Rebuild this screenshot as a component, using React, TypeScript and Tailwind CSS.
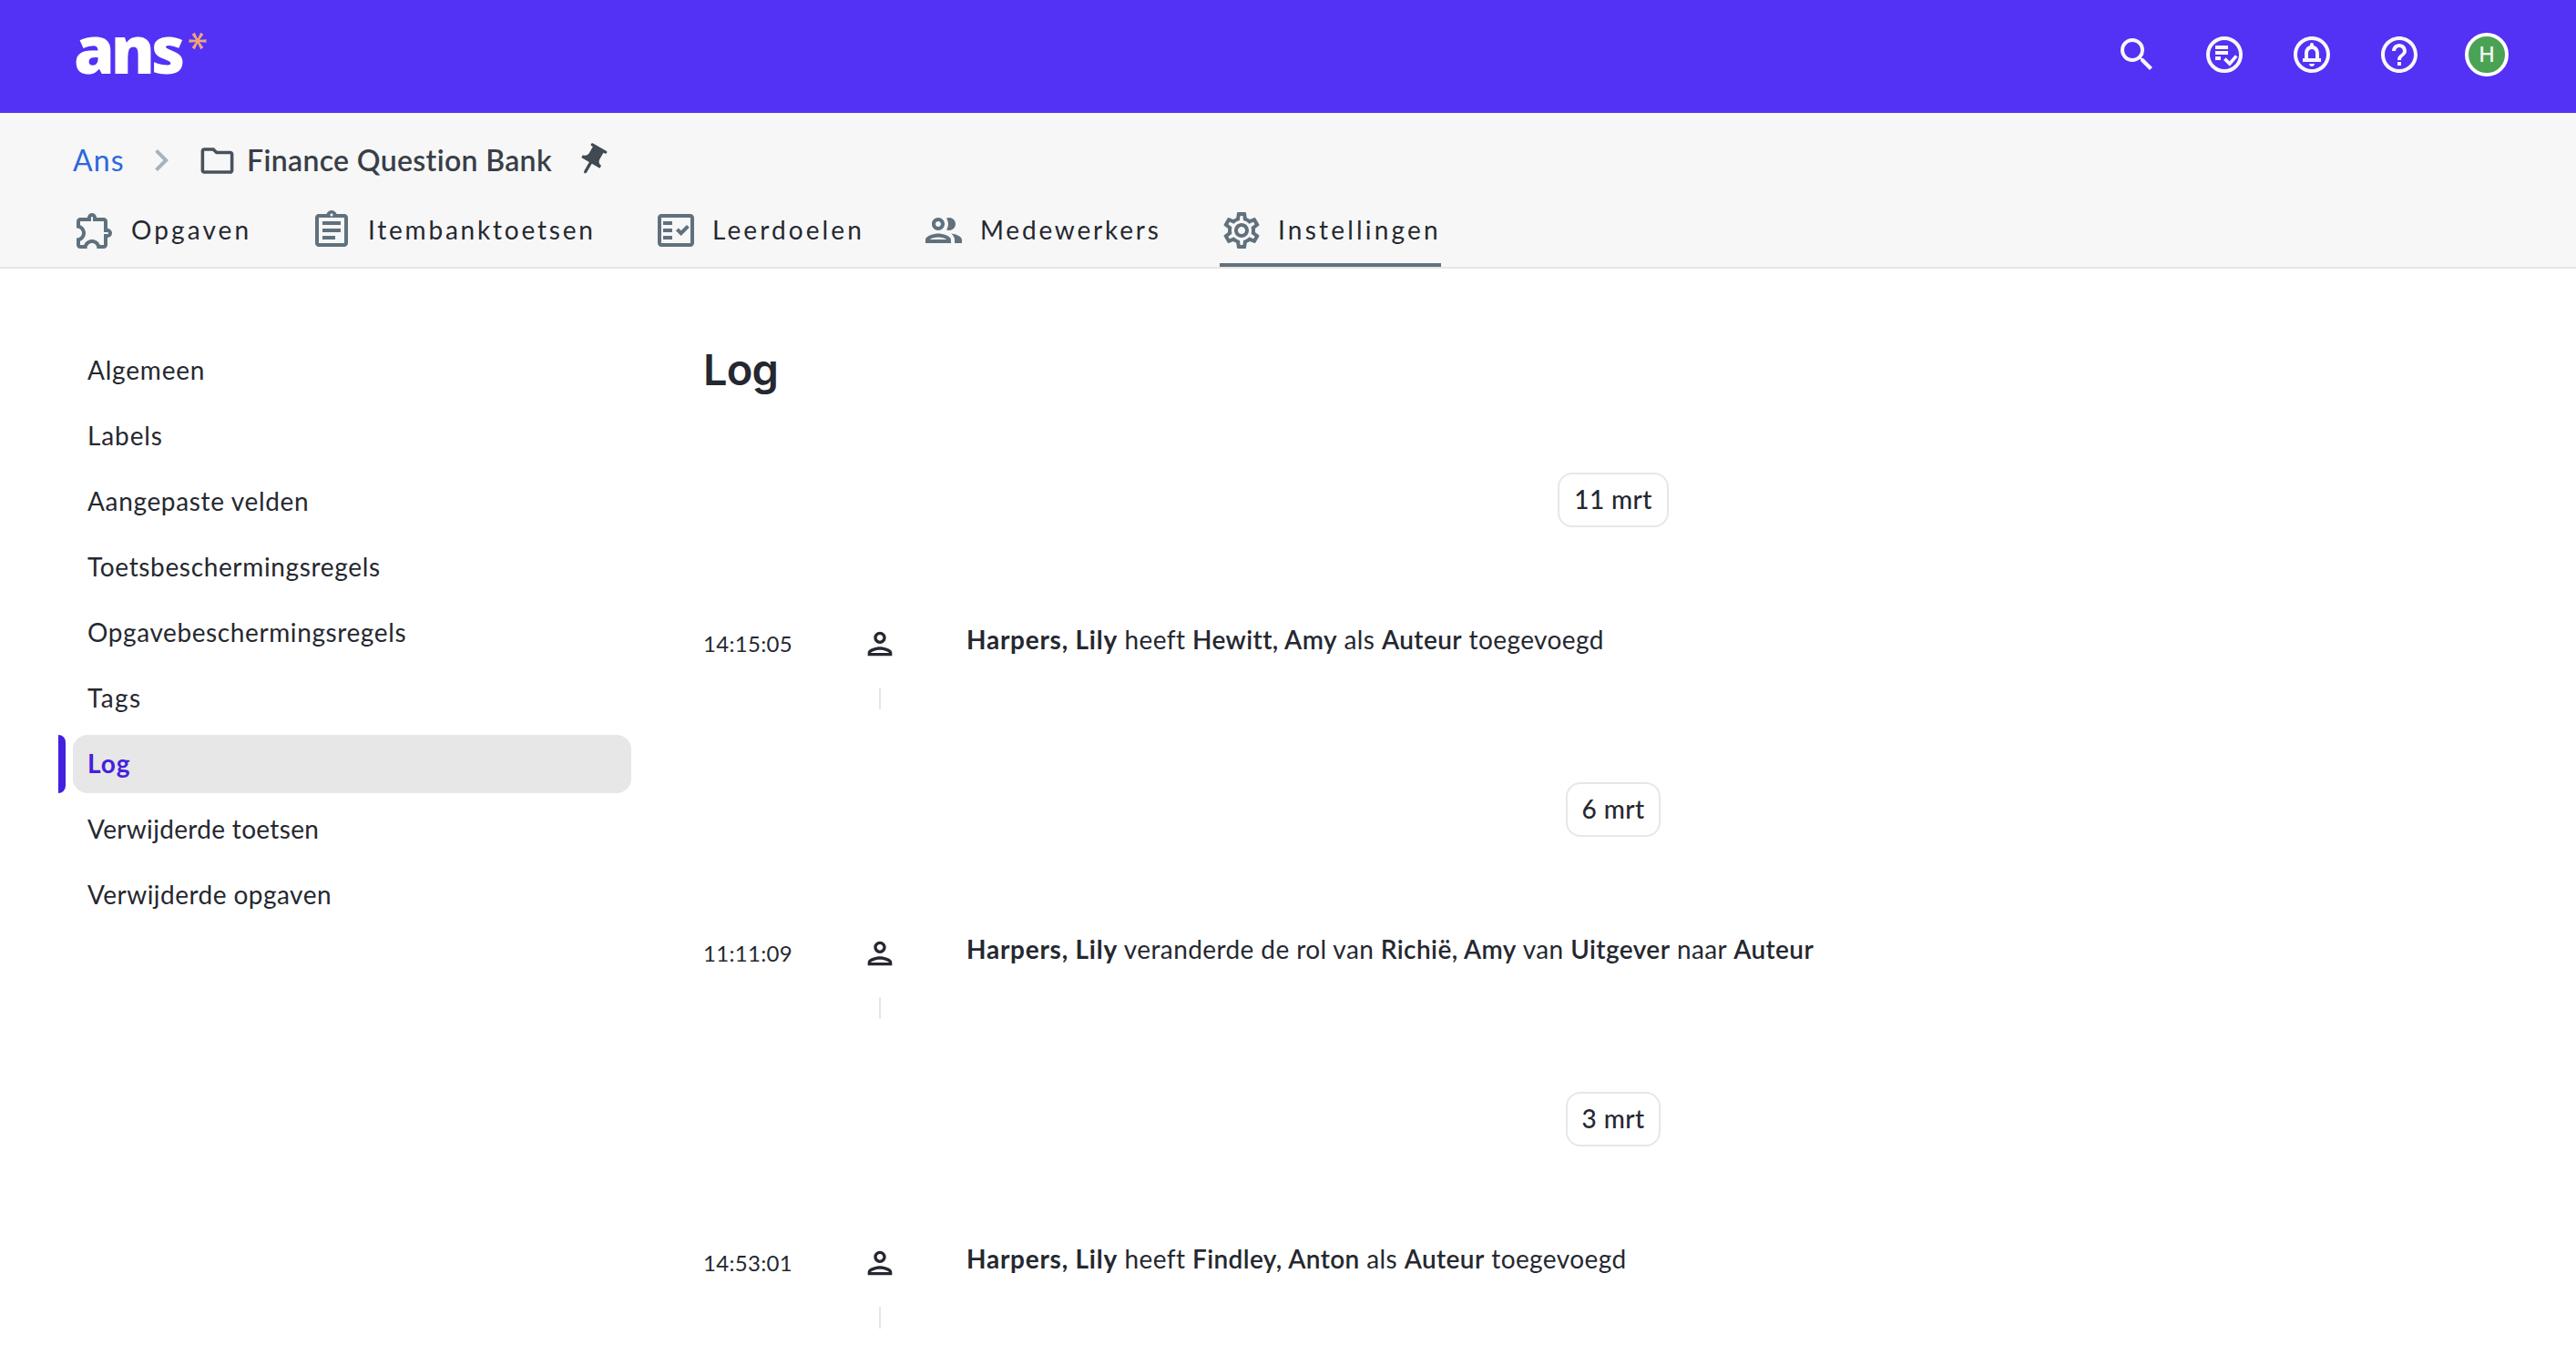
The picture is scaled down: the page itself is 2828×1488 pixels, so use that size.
import { useState } from 'react'
import type { ReactNode } from 'react'
import {
  MdChevronRight,
  MdHelpOutline,
  MdOutlineAssignment,
  MdOutlineCircleNotifications,
  MdOutlineExtension,
  MdOutlineFactCheck,
  MdOutlineFolder,
  MdOutlinePeople,
  MdOutlinePerson,
  MdOutlineSettings,
  MdPushPin,
  MdSearch,
} from 'react-icons/md'

const tabs = [
  { label: 'Opgaven', icon: MdOutlineExtension, className: 'w-[196px] tracking-[3.1px]' },
  { label: 'Itembanktoetsen', icon: MdOutlineAssignment, className: 'w-[314px] tracking-[2.8px]' },
  { label: 'Leerdoelen', icon: MdOutlineFactCheck, className: 'w-[230px] tracking-[3.1px]' },
  { label: 'Medewerkers', icon: MdOutlinePeople, className: 'w-[263px] tracking-[2.8px]' },
  { label: 'Instellingen', icon: MdOutlineSettings, className: 'w-[243px] tracking-[3.2px]' },
]

const menu = [
  { label: 'Algemeen', className: 'tracking-[0.8px]' },
  { label: 'Labels', className: 'tracking-[0.9px]' },
  { label: 'Aangepaste velden', className: 'tracking-[0.65px]' },
  { label: 'Toetsbeschermingsregels', className: 'tracking-[0.65px]' },
  { label: 'Opgavebeschermingsregels', className: 'tracking-[0.6px]' },
  { label: 'Tags', className: 'tracking-[1.4px]' },
  { label: 'Log', className: 'tracking-[1px]' },
  { label: 'Verwijderde toetsen', className: 'tracking-[0.32px]' },
  { label: 'Verwijderde opgaven', className: 'tracking-[0.46px]' },
]

const Name = ({ children }: { children: ReactNode }) => <span className="font-semibold">{children}</span>

const days = [
  {
    date: '11 mrt',
    time: '14:15:05',
    text: <>heeft <Name>Hewitt, Amy</Name> als <Name>Auteur</Name> toegevoegd</>,
  },
  {
    date: '6 mrt',
    time: '11:11:09',
    text: <>veranderde de rol van <Name>Richië, Amy</Name> van <Name>Uitgever</Name> naar <Name>Auteur</Name></>,
  },
  {
    date: '3 mrt',
    time: '14:53:01',
    text: <>heeft <Name>Findley, Anton</Name> als <Name>Auteur</Name> toegevoegd</>,
  },
]

function Asterisk() {
  return (
    <svg viewBox="-10 -10 20 20" className="size-5" fill="#eea67a">
      {[0, 60, 120, 180, 240, 300].map(a => (
        <path key={a} d="M0 -1L9.5 -1.8V1.8L0 1Z" transform={`rotate(${a})`} />
      ))}
    </svg>
  )
}

function GradingIcon() {
  return (
    <svg viewBox="0 0 48 48" className="size-12" fill="none" stroke="currentColor" strokeWidth="4">
      <circle cx="24" cy="24" r="18" />
      <path d="M14 16h14M14 22h14M14 28h6" />
      <path d="M24.3 28.6l5.5 5.4 7.4-8.6" strokeWidth="3.6" />
    </svg>
  )
}

export default function App() {
  const [activeTab, setActiveTab] = useState('Instellingen')
  const [activeItem, setActiveItem] = useState('Log')

  return (
    <div className="h-[1488px] overflow-hidden bg-white font-['Lato',sans-serif] text-[28px] text-[#252830]">
      {/* Top bar */}
      <header className="flex h-[124px] items-center justify-between bg-[#5331f5] pl-20 pr-[74px]">
        <div className="flex h-[124px] items-start">
          <span className="mt-[4px] ml-px w-[120px] font-['Noto_Sans',sans-serif] text-[72px] leading-[98px] font-black tracking-[-4px] text-white">ans</span>
          <span className="mt-[35px] ml-[6px]"><Asterisk /></span>
        </div>
        <div className="flex h-[120px] items-center gap-12 self-start text-[#f7f7f7]">
          <MdSearch className="size-12" />
          <GradingIcon />
          <MdOutlineCircleNotifications className="size-12" />
          <MdHelpOutline className="size-12" />
          <div className="flex size-12 items-center justify-center rounded-full border-4 border-white bg-[#4aa254] font-['Inter',sans-serif] text-[23px] font-medium">
            H
          </div>
        </div>
      </header>

      {/* Breadcrumb and tabs */}
      <div className="h-[171px] border-b-2 border-[#e6e6e6] bg-[#f7f7f7] px-20 pt-7">
        <div className="flex h-12 items-center text-[32px] leading-[48px]">
          <a href="#" className="w-[57px] tracking-[1.2px] text-[#2d68dc]">Ans</a>
          <MdChevronRight className="ml-4 size-12 text-[#a6b3bc]" />
          <MdOutlineFolder className="ml-4 size-[43px] text-[#47525d]" />
          <span className="ml-[11px] w-[336px] font-semibold tracking-[0.35px] whitespace-nowrap text-[#383f47]">Finance Question Bank</span>
          <MdPushPin className="ml-[23px] size-10 rotate-30 text-[#414a53]" />
        </div>
        <nav className="mt-[29px] flex gap-16">
          {tabs.map(({ label, icon: Icon, className }) => (
            <button
              key={label}
              onClick={() => setActiveTab(label)}
              className={`flex h-16 items-start border-b-4 leading-[46px] whitespace-nowrap ${className} ${
                activeTab === label ? 'border-[#60717d]' : 'border-transparent'
              }`}
            >
              <Icon className="size-12 shrink-0 text-[#60717d]" />
              <span className="ml-[16px]">{label}</span>
            </button>
          ))}
        </nav>
      </div>

      <div className="flex pt-20">
        {/* Settings menu */}
        <ul className="flex w-[693px] flex-col gap-2 pl-16">
          {menu.map(({ label, className }) => (
            <li key={label} className="flex h-16 gap-2">
              <span className={`w-2 rounded-r-lg ${activeItem === label ? 'bg-[#4420df]' : ''}`}></span>
              <button
                onClick={() => setActiveItem(label)}
                className={`flex-1 rounded-2xl px-4 pb-[2px] text-left ${className} ${
                  activeItem === label ? 'bg-[#e7e7e7] font-bold text-[#4420df]' : ''
                }`}
              >
                {label}
              </button>
            </li>
          ))}
        </ul>

        {/* Log */}
        <main className="ml-[79px] w-[1998px]">
          <h1 className="h-16 font-['Inter',sans-serif] text-[47px] leading-[62px] font-semibold tracking-[-0.8px]">Log</h1>
          <div className="mt-20 flex flex-col gap-20">
            {days.map(day => (
              <section key={day.date} className="h-[260px]">
                <div className="flex justify-center">
                  <span className="h-[60px] rounded-2xl border-2 border-[#e7e7e7] px-[16px] leading-[54px] font-medium tracking-[0.4px]">{day.date}</span>
                </div>
                <div className="mt-[108px] flex h-10">
                  <span className="w-[174px] text-[24px] leading-[39px] tracking-[0.3px]">{day.time}</span>
                  <MdOutlinePerson className="size-10" />
                  <p className="ml-[75px] leading-[30px] tracking-[0.4px] whitespace-nowrap">
                    <span className="font-bold tracking-[0.75px]">Harpers, Lily</span> {day.text}
                  </p>
                </div>
                <div className="mt-7 ml-[193px] h-6 w-0.5 bg-[#e6e6e6]"></div>
              </section>
            ))}
          </div>
        </main>
      </div>
    </div>
  )
}
